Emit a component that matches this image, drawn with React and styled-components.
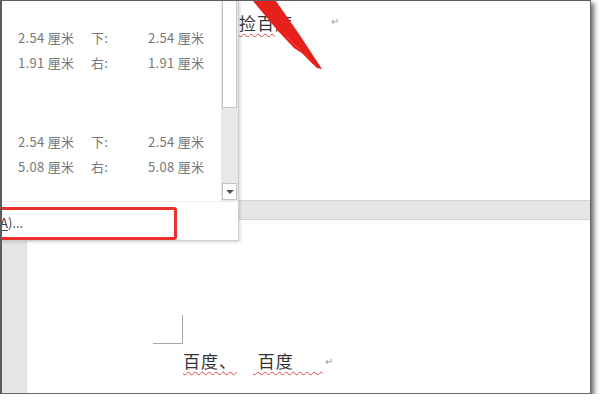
import React from "react";
import styled, { createGlobalStyle } from "styled-components";

const Global = createGlobalStyle`
  html, body { margin: 0; padding: 0; background: #ffffff; }
  body { font-family: "Noto Sans CJK SC", "Noto Sans", sans-serif; }
`;

const Frame = styled.div`
  position: relative;
  width: 588px;
  height: 392px;
  border-top: 1px solid #5c5c5c;
  border-left: 2px solid #5c5c5c;
  border-right: 1px solid #666666;
  border-bottom: 1px solid #666666;
  box-shadow: 3px 3px 5px rgba(0, 0, 0, 0.6);
  background: #ffffff;
  overflow: hidden;
  display: flex;
  flex-direction: column;
`;

const TopPage = styled.div`
  height: 199px;
  padding-left: 237px;
  padding-top: 9px;
  box-sizing: border-box;
  background: #ffffff;
  display: flex;
  align-items: flex-start;
`;

const DocText = styled.span`
  font-size: 17px;
  line-height: 26px;
  color: #333333;
  letter-spacing: 1px;
  margin-left: ${(p) => p.$ml || 0}px;
  text-decoration: ${(p) => (p.$wavy ? "underline wavy #e0484a" : "none")};
  text-decoration-thickness: 1px;
  text-underline-offset: 3px;
  white-space: pre;
`;

const Pilcrow = styled.span`
  font-size: 10px;
  color: #9a9a9a;
  margin-left: ${(p) => p.$ml}px;
  line-height: 22px;
`;

const Band = styled.div`
  height: 20px;
  background: #e6e6e6;
  border-top: 1px solid #d4d4d4;
  border-bottom: 1px solid #d4d4d4;
  box-sizing: border-box;
`;

const Lower = styled.div`
  flex: 1;
  display: flex;
`;

const Gutter = styled.div`
  width: 24px;
  background: #e6e6e6;
  border-right: 1px solid #dcdcdc;
`;

const Page = styled.div`
  flex: 1;
  background: #ffffff;
  padding-top: 95px;
  padding-left: 126px;
  display: flex;
  flex-direction: column;
`;

const CropMark = styled.div`
  width: 29px;
  height: 28px;
  border-right: 1px solid #a8a8a8;
  border-bottom: 1px solid #a8a8a8;
`;

const PageLine = styled.div`
  margin-left: 30px;
  margin-top: 4px;
  display: flex;
  align-items: center;
`;

const Dropdown = styled.div`
  position: absolute;
  left: 0;
  top: 0;
  width: 236px;
  height: 239px;
  background: #ffffff;
  border-right: 1px solid #cfcfcf;
  border-bottom: 1px solid #cfcfcf;
  box-shadow: 1px 1px 3px rgba(0, 0, 0, 0.18);
  display: flex;
  flex-direction: column;
`;

const ListArea = styled.div`
  height: 200px;
  display: flex;
`;

const List = styled.div`
  flex: 1;
  padding-top: 24px;
  display: flex;
  flex-direction: column;
  gap: 54px;
`;

const Group = styled.div`
  display: grid;
  grid-template-columns: 73px 57px auto;
  padding-left: 16px;
`;

const Cell = styled.div`
  font-size: 13px;
  line-height: 25px;
  color: #777777;
  letter-spacing: 0.3px;
  white-space: pre;
`;

const Scrollbar = styled.div`
  width: 17px;
  background: #e8e8e8;
  display: flex;
  flex-direction: column;
  justify-content: space-between;
  padding-bottom: 1px;
  box-sizing: border-box;
`;

const Thumb = styled.div`
  height: 106px;
  margin: 0 1px;
  background: #ffffff;
  border: 1px solid #c6c6c6;
  border-top: none;
`;

const ArrowBtn = styled.div`
  height: 15px;
  margin: 0 1px;
  background: #ffffff;
  border: 1px solid #c4c4c4;
  display: flex;
  align-items: center;
  justify-content: center;
`;

const Tri = styled.div`
  width: 0;
  height: 0;
  border-left: 4px solid transparent;
  border-right: 4px solid transparent;
  border-top: 4px solid #555555;
`;

const Footer = styled.div`
  flex: 1;
  border-top: 1px solid #eeeeee;
  display: flex;
  align-items: center;
  padding-top: 3px;
`;

const FooterText = styled.span`
  font-size: 13px;
  color: #444444;
  margin-left: -2px;
  white-space: pre;
`;

const U = styled.span`
  text-decoration: underline;
  text-underline-offset: 2px;
`;

const Highlight = styled.div`
  position: absolute;
  left: -12px;
  top: 206px;
  width: 187px;
  height: 33px;
  border: 3px solid #e8312d;
  border-radius: 3px;
  box-sizing: border-box;
  pointer-events: none;
`;

const Arrow = styled.svg`
  position: absolute;
  left: 0;
  top: 0;
  pointer-events: none;
`;

const rows = [
  [
    ["2.54 厘米", "下:", "2.54 厘米"],
    ["1.91 厘米", "右:", "1.91 厘米"],
  ],
  [
    ["2.54 厘米", "下:", "2.54 厘米"],
    ["5.08 厘米", "右:", "5.08 厘米"],
  ],
];

export default function App() {
  return (
    <>
      <Global />
      <Frame>
        <TopPage>
          <DocText $wavy>捡百</DocText>
          <DocText>度</DocText>
          <Pilcrow $ml={38}>↵</Pilcrow>
        </TopPage>
        <Band />
        <Lower>
          <Gutter />
          <Page>
            <CropMark />
            <PageLine>
              <DocText $wavy>百度、</DocText>
              <DocText $ml={16} $wavy>
                {" 百度      "}
              </DocText>
              <Pilcrow $ml={2}>↵</Pilcrow>
            </PageLine>
          </Page>
        </Lower>

        <Dropdown>
          <ListArea>
            <List>
              {rows.map((g, gi) => (
                <Group key={gi}>
                  {g.map((r, ri) =>
                    r.map((c, ci) => <Cell key={`${ri}-${ci}`}>{c}</Cell>)
                  )}
                </Group>
              ))}
            </List>
            <Scrollbar>
              <Thumb />
              <ArrowBtn>
                <Tri />
              </ArrowBtn>
            </Scrollbar>
          </ListArea>
          <Footer>
            <FooterText>
              <U>A</U>)...
            </FooterText>
          </Footer>
        </Dropdown>
        <Highlight />

        <Arrow width="590" height="120" viewBox="0 0 590 120">
          <polygon
            points="251,0 274,0 297,33 320,68 315,67 301,53 292,47 276,30"
            fill="#e8201c"
          />
          <polyline
            points="285,36 311,63"
            stroke="#f04a45"
            strokeWidth="1"
            fill="none"
          />
        </Arrow>
      </Frame>
    </>
  );
}
